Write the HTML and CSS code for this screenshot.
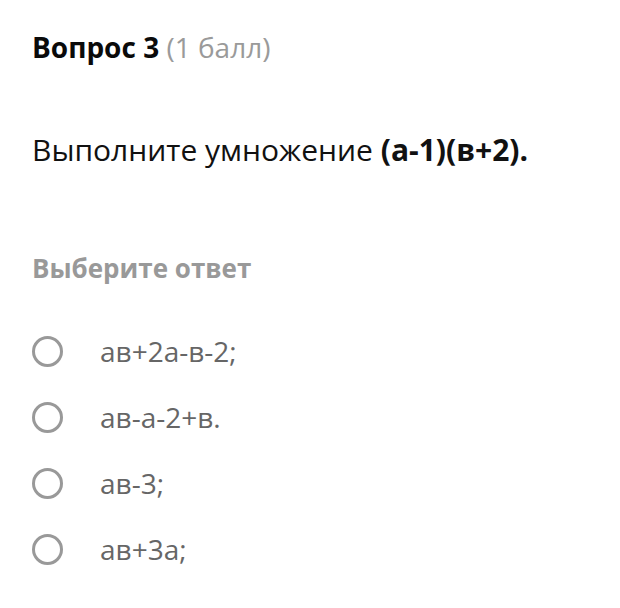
FILE: index.html
```html
<!DOCTYPE html>
<html lang="ru">
<head>
<meta charset="utf-8">
<link rel="stylesheet" href="styles.css">
</head>
<body>
<div class="page">
  <h2 class="title">Вопрос 3 <span class="points">(1 балл)</span></h2>
  <p class="question">Выполните умножение <b>(а-1)(в+2).</b></p>
  <div class="hint">Выберите ответ</div>
  <ul class="answers">
    <li class="answer"><span class="radio"></span><span class="label">ав+2а-в-2;</span></li>
    <li class="answer"><span class="radio"></span><span class="label">ав-а-2+в.</span></li>
    <li class="answer"><span class="radio"></span><span class="label">ав-3;</span></li>
    <li class="answer"><span class="radio"></span><span class="label">ав+3а;</span></li>
  </ul>
</div>
</body>
</html>
```

FILE: styles.css
```css
html, body {
  margin: 0;
  padding: 0;
  background: #fff;
}
.page {
  font-family: "Open Sans", "Liberation Sans", sans-serif;
  padding: 27px 32px 0 32px;
  color: #111;
}
.title {
  margin: 0;
  font-size: 28px;
  font-weight: 700;
  line-height: 40px;
  color: #0a0a0a;
}
.points {
  font-weight: 400;
  color: #9a9a9a;
}
.question {
  margin: 63px 0 0 0;
  font-size: 30px;
  line-height: 40px;
  color: #111;
}
.question b {
  font-weight: 700;
}
.hint {
  margin-top: 83px;
  font-size: 26px;
  font-weight: 700;
  color: #999;
  line-height: 30px;
}
.answers {
  list-style: none;
  margin: 48px 0 0 0;
  padding: 0;
  display: flex;
  flex-direction: column;
  gap: 26px;
}
.answer {
  display: flex;
  align-items: center;
  height: 40px;
}
.radio {
  box-sizing: border-box;
  width: 31px;
  height: 31px;
  border: 3px solid #999;
  border-radius: 50%;
  flex: none;
}
.label {
  margin-left: 37px;
  font-size: 28px;
  color: #666;
}
```
